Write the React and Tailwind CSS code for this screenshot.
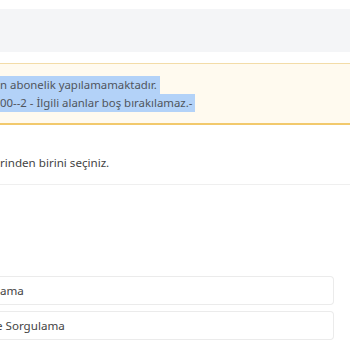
export default function App() {
  return (
    <div className="w-[350px] h-[350px] overflow-hidden bg-white" style={{ fontFamily: '"Noto Sans", "Open Sans", sans-serif' }}>
      <div className="h-[9px]" />
      <div className="h-[43px] bg-[#f4f5f7]" />
      <div className="h-[11px]" />
      <div className="h-[62px] bg-[#fffaef] border-t border-t-[#f3dca8] border-b-2 border-b-[#f2c96c] pt-[12px] text-[11.4px] leading-[18px] text-[#50555c] whitespace-nowrap">
        <div className="h-[18px]"><span className="inline-block h-[18px] bg-[#b3d2f8] pr-[3px]">n abonelik yapılamamaktadır.</span></div>
        <div className="h-[18px]"><span className="inline-block h-[18px] bg-[#b3d2f8] pr-[3px]">00--2 - İlgili alanlar boş bırakılamaz.-</span></div>
      </div>
      <div className="h-[60px] border-b border-b-[#efefef] flex items-center pt-[17px] text-[11.6px] text-[#444] whitespace-nowrap">
        rinden birini seçiniz.
      </div>
      <div className="h-[91px]" />
      <div className="w-[334px] flex flex-col gap-[6px]">
        <div className="h-[29px] border border-[#ebebeb] rounded-[4px] border-l-0 rounded-l-none flex items-center text-[11.6px] text-[#444] whitespace-nowrap">
          ama
        </div>
        <div className="h-[29px] border border-[#ebebeb] rounded-[4px] border-l-0 rounded-l-none flex items-center text-[11.6px] text-[#444] whitespace-nowrap overflow-hidden">
          <span className="-ml-[4px]">e Sorgulama</span>
        </div>
      </div>
    </div>
  );
}
